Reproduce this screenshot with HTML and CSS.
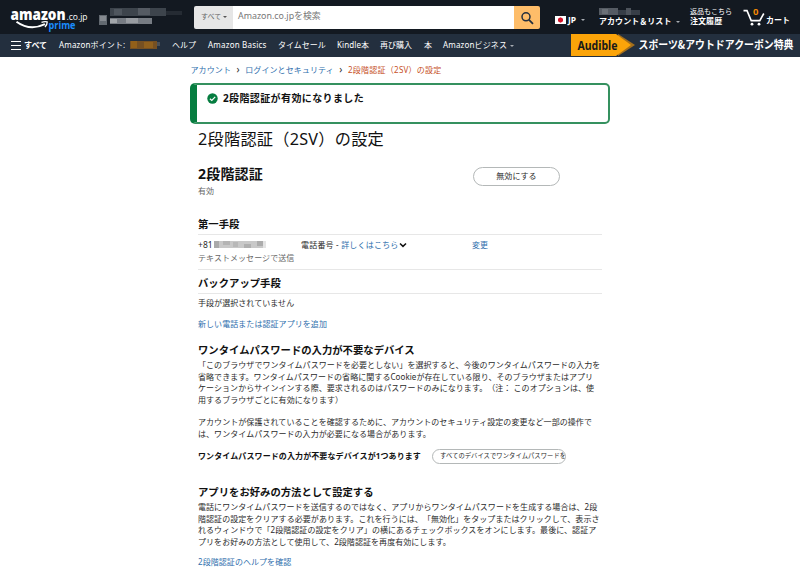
FILE: index.html
```
<!DOCTYPE html>
<html lang="ja">
<head>
    <meta charset="UTF-8">
    <meta name="viewport" content="width=device-width, initial-scale=1.0">
    <title>2段階認証（2SV）の設定</title>
    <link rel="stylesheet" href="styles.css">
</head>
<body>
    <header class="topbar">
        <svg class="logo" width="80" height="34" viewBox="0 0 80 34">
            <text class="logo-name" x="0.5" y="20" textLength="55" lengthAdjust="spacingAndGlyphs">amazon</text>
            <text class="logo-tld" x="56.5" y="19.5" textLength="21" lengthAdjust="spacingAndGlyphs">.co.jp</text>
            <path d="M6.5 21.8 Q20 31.5 35 24.2" fill="none" stroke="#fff" stroke-width="2"/>
            <path d="M31.5 22.3 Q35 21 37.2 21.9 Q37.3 24.5 35 27" fill="none" stroke="#fff" stroke-width="1.3"/>
            <text class="logo-prime" x="38.5" y="29" textLength="27" lengthAdjust="spacingAndGlyphs">prime</text>
        </svg>
        <svg class="deliver" width="84" height="34" viewBox="0 0 84 34">
            <rect x="0" y="15" width="8" height="10" fill="#626970"/>
            <rect x="1" y="16" width="6" height="5" fill="#858a90"/>
            <rect x="11" y="8" width="56" height="8" fill="#3d444c"/>
            <rect x="15" y="9" width="8" height="6" fill="#4f565e"/>
            <rect x="39" y="8" width="12" height="7" fill="#555b63"/>
            <rect x="67" y="11" width="16" height="4" fill="#252b33"/>
            <rect x="11" y="18" width="42" height="6" fill="#777c83"/>
            <rect x="11" y="19" width="7" height="4" fill="#a1a5a9"/>
            <rect x="27" y="18" width="12" height="5" fill="#989ca1"/>
        </svg>
        <div class="search">
            <div class="search-cat">すべて<i class="caret"></i></div>
            <div class="search-input">Amazon.co.jpを検索</div>
            <div class="search-btn">
                <svg width="14" height="14" viewBox="0 0 14 14">
                    <circle cx="6" cy="5.8" r="4" fill="none" stroke="#232f3e" stroke-width="1.5"/>
                    <path d="M9 8.8 L13 12.8" stroke="#232f3e" stroke-width="1.8"/>
                </svg>
            </div>
        </div>
        <div class="lang"><i class="flag"></i><span>JP</span><i class="caret"></i></div>
        <div class="account">
            <svg width="43" height="8" viewBox="0 0 43 8">
                <rect width="19" height="7" fill="#555b63"/>
                <rect x="3" y="1" width="6" height="5" fill="#6a7077"/>
                <rect x="19" y="2" width="22" height="5" fill="#373e47"/>
                <rect x="27" width="5" height="7" fill="#4d535b"/>
            </svg>
            <div class="tool-label">アカウント＆リスト<i class="caret"></i></div>
        </div>
        <div class="orders">
            <div class="tool-small">返品もこちら</div>
            <div class="tool-label">注文履歴</div>
        </div>
        <div class="cart">
            <svg width="23" height="22" viewBox="0 -4 23 22">
                <path d="M0.5 1.6 H4 L8.2 11.6 H16.8 L20.8 4.5" fill="none" stroke="#fff" stroke-width="1.6"/>
                <circle cx="9" cy="15.2" r="1.4" fill="#fff"/>
                <circle cx="16" cy="15.2" r="1.4" fill="#fff"/>
                <text class="cart-count" x="12.7" y="6" text-anchor="middle">0</text>
            </svg>
            <span>カート</span>
        </div>
    </header>

    <nav class="navbar">
        <div class="nav-all"><i class="burger"></i>すべて</div>
        <div class="nav-item points">Amazonポイント:</div>
        <svg class="points-value" width="31" height="22" viewBox="0 0 31 22">
            <rect y="7" width="27" height="8" fill="#765022"/>
            <rect x="1" y="7" width="6" height="7" fill="#936019"/>
            <rect x="14" y="8" width="9" height="6" fill="#90601d"/>
            <rect x="27" y="8" width="3" height="4" fill="#4a5058"/>
        </svg>
        <div class="nav-item help">ヘルプ</div>
        <div class="nav-item basics">Amazon Basics</div>
        <div class="nav-item sale">タイムセール</div>
        <div class="nav-item kindle">Kindle本</div>
        <div class="nav-item again">再び購入</div>
        <div class="nav-item books">本</div>
        <div class="nav-item business">Amazonビジネス<i class="caret"></i></div>
        <svg class="promo" width="229" height="22" viewBox="0 0 229 22">
            <path d="M47 0 L64 11 L47 22 Z" fill="#a46f1c"/>
            <path d="M0 0 H45 L60 11 L45 22 H0 Z" fill="#fba409"/>
            <text class="promo-brand" x="6.5" y="15.5" textLength="40" lengthAdjust="spacingAndGlyphs">Audible</text>
            <text class="promo-text" x="67.5" y="15.2" textLength="155" lengthAdjust="spacingAndGlyphs">スポーツ&amp;アウトドアクーポン特典</text>
        </svg>
    </nav>

    <main class="page">
        <div class="breadcrumb">
            <a>アカウント</a><b>›</b><a>ログインとセキュリティ</a><b>›</b><span>2段階認証（2SV）の設定</span>
        </div>

        <div class="alert">
            <svg width="11" height="11" viewBox="0 0 11 11">
                <circle cx="5.5" cy="5.5" r="5.2" fill="#067d40"/>
                <path d="M2.9 5.7 L4.8 7.5 L8.2 3.8" fill="none" stroke="#fff" stroke-width="1.2"/>
            </svg>
            <span>2段階認証が有効になりました</span>
        </div>

        <div class="content">
            <h1>2段階認証（2SV）の設定</h1>

            <div class="status">
                <div>
                    <h2>2段階認証</h2>
                    <p class="muted">有効</p>
                </div>
                <div class="btn btn-disable">無効にする</div>
            </div>

            <h3 class="first-method">第一手段</h3>
            <div class="method">
                <div class="method-number">
                    <div class="phone">+81<svg width="52" height="9" viewBox="0 0 52 9">
                        <rect y="1" width="51" height="7" fill="#c8c8c8"/>
                        <rect y="1" width="5" height="7" fill="#aaa"/>
                        <rect x="9" y="1" width="7" height="4" fill="#b4b4b4"/>
                        <rect x="19" y="2" width="5" height="5" fill="#b8b8b8"/>
                        <rect x="30" y="4" width="7" height="4" fill="#afafaf"/>
                        <rect x="43" y="1" width="6" height="5" fill="#acacac"/>
                        <rect x="49" y="1" width="3" height="7" fill="#e4e4e4"/>
                    </svg></div>
                    <p class="muted">テキストメッセージで送信</p>
                </div>
                <div class="method-type">電話番号 - <a>詳しくはこちら</a><svg width="8" height="6" viewBox="0 0 8 6"><path d="M1 1.5 L4 4.4 L7 1.5" fill="none" stroke="#111" stroke-width="1.5"/></svg></div>
                <a class="method-edit">変更</a>
            </div>

            <h3 class="backup">バックアップ手段</h3>
            <p class="none">手段が選択されていません</p>
            <p class="add"><a>新しい電話または認証アプリを追加</a></p>

            <h3 class="section-title">ワンタイムパスワードの入力が不要なデバイス</h3>
            <p class="text">「このブラウザでワンタイムパスワードを必要としない」を選択すると、今後のワンタイムパスワードの入力を<br>省略できます。ワンタイムパスワードの省略に関するCookieが存在している限り、そのブラウザまたはアプリ<br>ケーションからサインインする際、要求されるのはパスワードのみになります。（注： このオプションは、使<br>用するブラウザごとに有効になります）</p>
            <p class="text spaced">アカウントが保護されていることを確認するために、アカウントのセキュリティ設定の変更など一部の操作で<br>は、ワンタイムパスワードの入力が必要になる場合があります。</p>

            <div class="devices">
                <strong>ワンタイムパスワードの入力が不要なデバイスが1つあります</strong>
                <div class="btn btn-devices">すべてのデバイスでワンタイムパスワードを</div>
            </div>

            <h3 class="section-title">アプリをお好みの方法として設定する</h3>
            <p class="text">電話にワンタイムパスワードを送信するのではなく、アプリからワンタイムパスワードを生成する場合は、2段<br>階認証の設定をクリアする必要があります。これを行うには、「無効化」をタップまたはクリックして、表示さ<br>れるウィンドウで「2段階認証の設定をクリア」の横にあるチェックボックスをオンにします。最後に、認証ア<br>プリをお好みの方法として使用して、2段階認証を再度有効にします。</p>
            <p class="help-link"><a>2段階認証のヘルプを確認</a></p>
        </div>
    </main>
</body>
</html>
```
FILE: styles.css
```
* {
    box-sizing: border-box;
}

body {
    margin: 0;
    height: 577px;
    overflow: hidden;
    background-color: #fff;
    color: #2b2b2b;
    font-family: "Noto Sans", "Noto Sans CJK JP", sans-serif;
    font-size: 8px;
    white-space: nowrap;
    text-spacing-trim: space-all;
}

h1, h2, h3, p {
    margin: 0;
}

a {
    color: #2f6fad;
}

.caret {
    display: inline-block;
    margin-left: 5px;
    border: 2px solid transparent;
    border-top-color: #a7acb2;
    border-bottom: 0;
    vertical-align: 1px;
}

/* Top bar */
.topbar {
    display: flex;
    height: 34px;
    background-color: #131921;
    color: #fff;
}

.logo {
    margin-left: 10px;
    flex: none;
}

.logo-name {
    font: 800 16.5px "Open Sans", sans-serif;
    fill: #fff;
}

.logo-tld {
    font: 8.5px "Open Sans", sans-serif;
    fill: #fff;
}

.logo-prime {
    font: bold 10px "Open Sans", sans-serif;
    fill: #1a8cff;
}

.deliver {
    margin-left: 9px;
    flex: none;
}

.search {
    display: flex;
    width: 346px;
    height: 23px;
    margin: 6px 0 0 11px;
    border-radius: 2px;
    overflow: hidden;
    line-height: 22px;
    flex: none;
}

.search-cat {
    width: 39px;
    padding-left: 7px;
    background-color: #e6e6e6;
    color: #666;
    font-size: 7px;
}

.search-cat .caret {
    margin-left: 2px;
    border-top-color: #555;
}

.search-input {
    flex: 1;
    padding-left: 5px;
    background-color: #fff;
    color: #777;
    font-size: 8.9px;
    line-height: 20px;
}

.search-btn {
    width: 26px;
    padding: 5px 0 0 6px;
    background-color: #febd69;
    line-height: 0;
}

.lang {
    display: flex;
    align-items: center;
    width: 44px;
    height: 12px;
    margin: 14px 0 0 15px;
    font-size: 8.5px;
    font-weight: bold;
}

.lang span {
    height: 13px;
    line-height: 11px;
}

.flag {
    width: 11px;
    height: 8px;
    margin-right: 2px;
    background: radial-gradient(circle, #d3142b 2.3px, #fff 2.8px);
}

.account {
    width: 91px;
    padding-top: 8px;
}

.account svg {
    display: block;
}

.tool-label {
    height: 10px;
    font-weight: bold;
    line-height: 9px;
    letter-spacing: 0.05px;
}

.tool-small {
    height: 8px;
    font-size: 7px;
    line-height: 8px;
}

.orders {
    width: 53px;
    padding-top: 8px;
}

.cart {
    display: flex;
    padding-top: 5px;
    font-weight: bold;
    line-height: 29px;
}

.cart-count {
    font: bold 9.5px "Noto Sans", sans-serif;
    fill: #f08804;
}

/* Navigation */
.navbar {
    display: flex;
    height: 23px;
    background-color: #232f3e;
    color: #fff;
    line-height: 22px;
}

.nav-all {
    display: flex;
    align-items: center;
    width: 48px;
    height: 22px;
    margin-left: 11px;
    font-weight: bold;
}

.burger {
    width: 10px;
    height: 9px;
    margin-right: 3px;
    border-top: 1px solid #fff;
    border-bottom: 1px solid #fff;
    background: linear-gradient(#fff, #fff) 0 3px / 10px 1px no-repeat;
}

.nav-item {
    flex: none;
}

.points {
    width: 71px;
    letter-spacing: 0.15px;
}

.points-value {
    flex: none;
    width: 31px;
    margin-right: 11px;
}

.help {
    width: 36px;
}

.basics {
    width: 70px;
    letter-spacing: 0.2px;
}

.sale {
    width: 59px;
}

.kindle {
    width: 43px;
    letter-spacing: 0.1px;
}

.again {
    width: 44px;
}

.books {
    width: 19px;
}

.business {
    width: 128px;
    letter-spacing: 0.15px;
}

.business .caret {
    margin-left: 3px;
}

.promo {
    flex: none;
}

.promo-brand {
    font: bold 12px "Noto Sans", sans-serif;
    fill: #191919;
}

.promo-text {
    font: bold 11px "Noto Sans CJK JP", sans-serif;
    fill: #fff;
}

/* Page */
.page {
    width: 420px;
    margin-left: 190px;
}

.breadcrumb {
    height: 26px;
    padding-left: 0.5px;
    line-height: 25px;
    letter-spacing: 0.1px;
}

.breadcrumb b {
    margin: 0 5.5px;
    font-size: 10px;
    font-weight: normal;
    line-height: 20px;
}

.breadcrumb span {
    color: #c7511f;
    letter-spacing: 0.25px;
}

.alert {
    display: flex;
    height: 41px;
    padding: 7px 0 0 10px;
    border: 2px solid #35915f;
    border-left: 7px solid #067d40;
    border-radius: 5px;
    color: #111;
    font-size: 10px;
    font-weight: bold;
    line-height: 13px;
    letter-spacing: 0.38px;
}

.alert svg {
    margin: 1px 5px 0 0;
}

.content {
    width: 404px;
    margin-left: 8px;
    letter-spacing: 0.06px;
}

h1 {
    height: 40px;
    color: #111;
    font-size: 16.2px;
    font-weight: normal;
    line-height: 30px;
    letter-spacing: 0.25px;
}

.status {
    display: flex;
    height: 52px;
}

.status > div:first-child {
    width: 275px;
}

h2 {
    height: 20px;
    color: #111;
    font-size: 14px;
    line-height: 20px;
    letter-spacing: 0.2px;
}

.muted {
    color: #666;
    line-height: 14px;
}

.btn {
    border: 1px solid #b4b8b8;
    border-radius: 10px;
    text-align: center;
}

.btn-disable {
    width: 87px;
    height: 19px;
    margin-top: 3px;
    line-height: 16px;
}

h3 {
    color: #111;
    font-size: 10.35px;
    line-height: 16px;
    letter-spacing: 0;
}

.first-method,
.backup {
    border-bottom: 1px solid #e7e7e7;
}

.first-method {
    height: 19px;
}

.method {
    display: flex;
    height: 35px;
    padding-top: 3px;
    border-bottom: 1px solid #e7e7e7;
    line-height: 14px;
}

.method-number {
    width: 103px;
}

.phone {
    height: 13px;
    font-size: 8.5px;
}

.phone svg {
    margin-left: 1px;
    vertical-align: -1px;
}

.method-type {
    width: 171px;
    letter-spacing: 0.2px;
}

.backup {
    height: 24px;
    line-height: 27px;
}

.none {
    height: 20px;
    line-height: 18px;
}

.add {
    height: 28px;
    line-height: 20px;
}

.section-title {
    height: 17px;
}

.text {
    line-height: 11.5px;
}

.spaced {
    margin-top: 11px;
}

.devices {
    display: flex;
    height: 35px;
    margin-top: 10px;
    line-height: 14px;
}

.devices strong {
    width: 234px;
    color: #111;
    letter-spacing: 0.1px;
}

.btn-devices {
    width: 134px;
    height: 15px;
    padding-left: 7px;
    overflow: hidden;
    font-size: 6.3px;
    line-height: 12px;
    text-align: left;
}

.help-link {
    line-height: 29px;
}
```
